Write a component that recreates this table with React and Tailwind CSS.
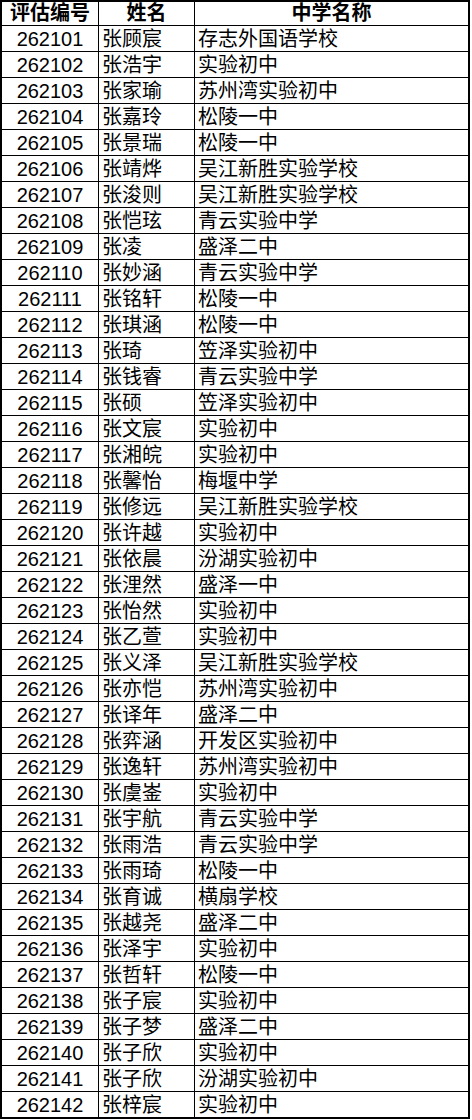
import React from "react";

const rows = [
  ["262101", "张顾宸", "存志外国语学校"],
  ["262102", "张浩宇", "实验初中"],
  ["262103", "张家瑜", "苏州湾实验初中"],
  ["262104", "张嘉玲", "松陵一中"],
  ["262105", "张景瑞", "松陵一中"],
  ["262106", "张靖烨", "吴江新胜实验学校"],
  ["262107", "张浚则", "吴江新胜实验学校"],
  ["262108", "张恺玹", "青云实验中学"],
  ["262109", "张凌", "盛泽二中"],
  ["262110", "张妙涵", "青云实验中学"],
  ["262111", "张铭轩", "松陵一中"],
  ["262112", "张琪涵", "松陵一中"],
  ["262113", "张琦", "笠泽实验初中"],
  ["262114", "张钱睿", "青云实验中学"],
  ["262115", "张硕", "笠泽实验初中"],
  ["262116", "张文宸", "实验初中"],
  ["262117", "张湘皖", "实验初中"],
  ["262118", "张馨怡", "梅堰中学"],
  ["262119", "张修远", "吴江新胜实验学校"],
  ["262120", "张许越", "实验初中"],
  ["262121", "张依晨", "汾湖实验初中"],
  ["262122", "张浬然", "盛泽一中"],
  ["262123", "张怡然", "实验初中"],
  ["262124", "张乙萱", "实验初中"],
  ["262125", "张义泽", "吴江新胜实验学校"],
  ["262126", "张亦恺", "苏州湾实验初中"],
  ["262127", "张译年", "盛泽二中"],
  ["262128", "张弈涵", "开发区实验初中"],
  ["262129", "张逸轩", "苏州湾实验初中"],
  ["262130", "张虞崟", "实验初中"],
  ["262131", "张宇航", "青云实验中学"],
  ["262132", "张雨浩", "青云实验中学"],
  ["262133", "张雨琦", "松陵一中"],
  ["262134", "张育诚", "横扇学校"],
  ["262135", "张越尧", "盛泽二中"],
  ["262136", "张泽宇", "实验初中"],
  ["262137", "张哲轩", "松陵一中"],
  ["262138", "张子宸", "实验初中"],
  ["262139", "张子梦", "盛泽二中"],
  ["262140", "张子欣", "实验初中"],
  ["262141", "张子欣", "汾湖实验初中"],
  ["262142", "张梓宸", "实验初中"],
];

const font = { fontFamily: '"Liberation Sans", "Noto Sans CJK SC", sans-serif' };

export default function App() {
  return (
    <div className="bg-white w-[472px] min-h-[1120px]" style={font}>
      <div className="w-[470px] border-2 border-black text-black text-[20px]">
        <div className="grid grid-cols-[97px_96px_1fr] h-[24px] border-b border-black font-bold leading-[23px]">
          <div className="border-r border-black text-center">评估编号</div>
          <div className="border-r border-black text-center">姓名</div>
          <div className="text-center">中学名称</div>
        </div>
        {rows.map((r, i) => (
          <div
            key={r[0]}
            className={
              i === rows.length - 1
                ? "grid grid-cols-[97px_96px_1fr] h-[25px] leading-[25px]"
                : "grid grid-cols-[97px_96px_1fr] h-[26px] leading-[25px] border-b border-black"
            }
          >
            <div className="border-r border-black text-center pt-px">{r[0]}</div>
            <div className="border-r border-black pl-[3px] pt-px whitespace-nowrap">{r[1]}</div>
            <div className="pl-[3px] pt-px whitespace-nowrap">{r[2]}</div>
          </div>
        ))}
      </div>
    </div>
  );
}
